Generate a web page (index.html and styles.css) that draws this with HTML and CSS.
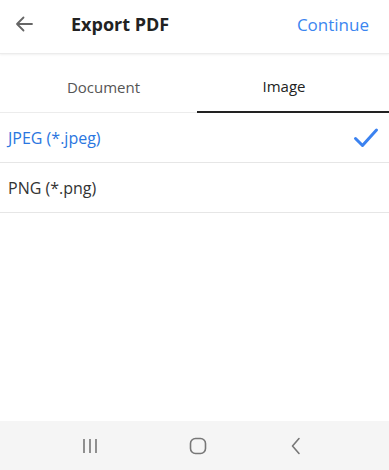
FILE: index.html
```html
<!DOCTYPE html>
<html lang="en">

<head>
  <meta charset="UTF-8">
  <meta name="viewport" content="width=device-width, initial-scale=1.0">
  <title>Export PDF</title>
  <link rel="stylesheet" href="styles.css">
</head>

<body>
  <div class="screen">
    <header class="top-bar">
      <button class="back-btn" aria-label="Back">
        <svg width="20" height="20" viewBox="0 0 20 20">
          <path d="M18 10H3M9.5 3.5L3 10l6.5 6.5" fill="none" stroke="#666" stroke-width="1.8" stroke-linecap="round" stroke-linejoin="round"/>
        </svg>
      </button>
      <h1 class="title">Export PDF</h1>
      <a class="continue" href="#">Continue</a>
    </header>

    <nav class="tabs">
      <div class="tab doc">Document</div>
      <div class="tab img active">Image</div>
    </nav>

    <ul class="formats">
      <li class="format selected">
        <span>JPEG (*.jpeg)</span>
        <svg width="26" height="22" viewBox="0 0 26 22">
          <path d="M2.5 11.5l7 7L23.5 3" fill="none" stroke="#3b82f0" stroke-width="3" stroke-linecap="round" stroke-linejoin="round"/>
        </svg>
      </li>
      <li class="format">
        <span>PNG (*.png)</span>
      </li>
    </ul>

    <div class="spacer"></div>

    <footer class="sys-nav">
      <svg class="nav-recent" width="16" height="16" viewBox="0 0 16 16">
        <path d="M2 1v14M8 1v14M14 1v14" stroke="#777" stroke-width="1.6"/>
      </svg>
      <svg class="nav-home" width="18" height="18" viewBox="0 0 18 18">
        <rect x="1.5" y="1.5" width="15" height="15" rx="5" fill="none" stroke="#777" stroke-width="1.6"/>
      </svg>
      <svg class="nav-back" width="12" height="18" viewBox="0 0 12 18">
        <path d="M9 1.5L2.5 9 9 16.5" fill="none" stroke="#777" stroke-width="1.6" stroke-linecap="round" stroke-linejoin="round"/>
      </svg>
    </footer>
  </div>
</body>

</html>
```

FILE: styles.css
```css
* {
  box-sizing: border-box;
}

body {
  margin: 0;
  font-family: 'Open Sans', 'Noto Sans', sans-serif;
  background: #fff;
}

.screen {
  width: 389px;
  height: 470px;
  display: flex;
  flex-direction: column;
}

.top-bar {
  height: 54px;
  display: flex;
  align-items: center;
  padding: 0 20px 0 13px;
  border-bottom: 1px solid #ececec;
  box-shadow: 0 1px 2px rgba(0, 0, 0, 0.06);
}

.back-btn {
  border: none;
  background: none;
  padding: 0;
  width: 22px;
  height: 22px;
  display: flex;
  align-items: center;
  justify-content: center;
  margin-top: -5px;
}

.title {
  margin: -5px 0 0 36px;
  font-size: 18px;
  font-weight: 700;
  color: #222;
  flex: 1;
}

.continue {
  margin-top: -5px;
  font-size: 17px;
  color: #3b86f0;
  text-decoration: none;
}

.tabs {
  display: flex;
  height: 59px;
  border-bottom: 1px solid #ececec;
}

.tab {
  display: flex;
  align-items: center;
  justify-content: center;
  padding-top: 7px;
  font-size: 15px;
  color: #555;
  margin-bottom: -1px;
}

.tab.doc {
  width: 197px;
  padding-left: 10px;
}

.tab.img {
  flex: 1;
  padding-right: 18px;
}

.tab.active {
  color: #222;
  border-bottom: 2px solid #222;
}

.formats {
  list-style: none;
  margin: 0;
  padding: 0;
}

.format {
  height: 50px;
  display: flex;
  align-items: center;
  justify-content: space-between;
  padding: 0 10px 0 8px;
  font-size: 16px;
  color: #333;
  border-bottom: 1px solid #e6e6e6;
}

.format.selected {
  color: #2a76e0;
}

.spacer {
  flex: 1;
}

.sys-nav {
  height: 49px;
  background: #f5f5f5;
  display: flex;
  align-items: center;
  padding-left: 82px;
}

.nav-home {
  margin-left: 91px;
}

.nav-back {
  margin-left: 83px;
}
```
